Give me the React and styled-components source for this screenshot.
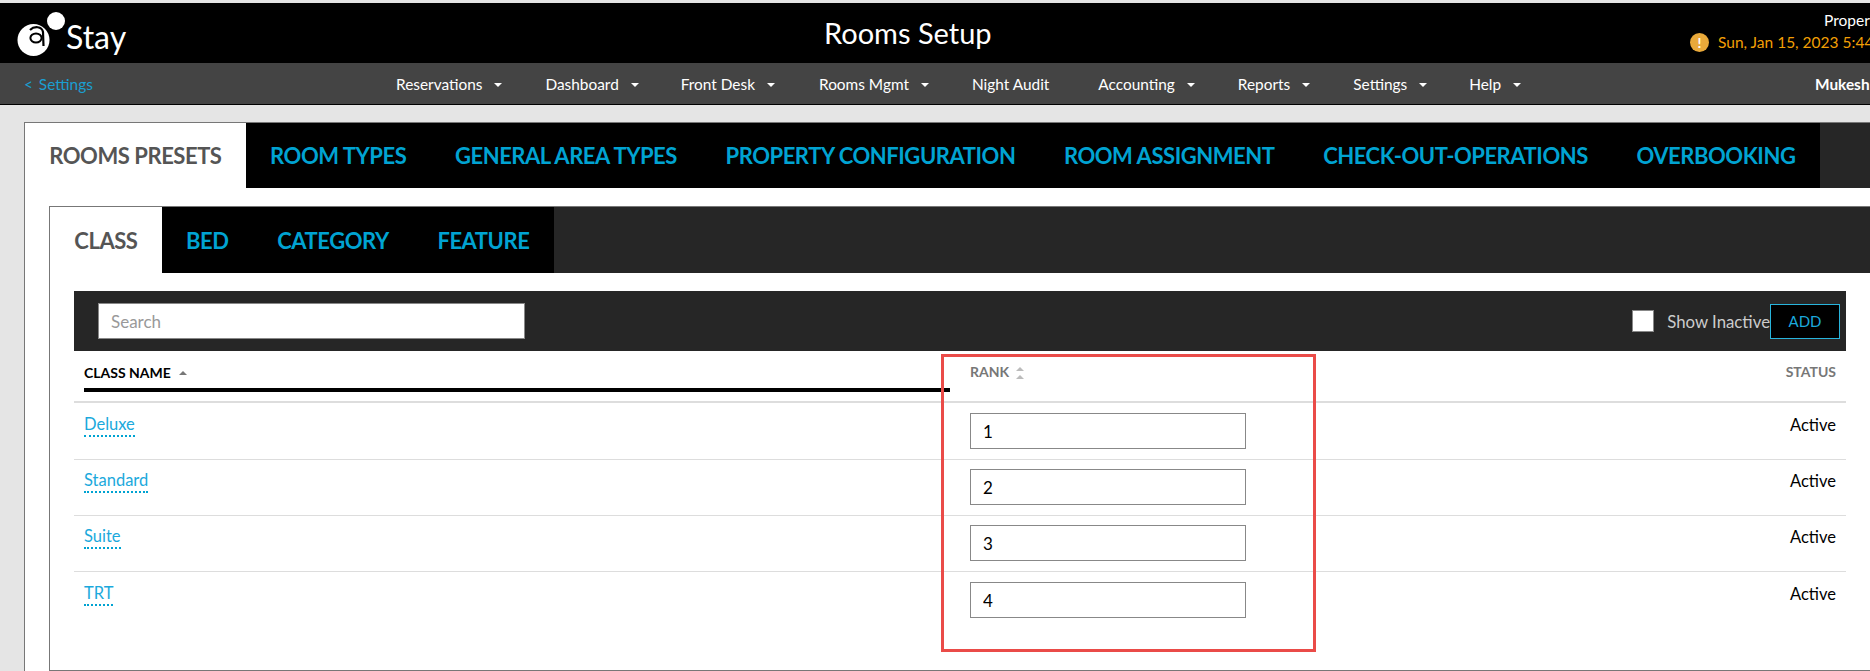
import React from 'react'
import styled, { createGlobalStyle } from 'styled-components'

const Global = createGlobalStyle`
  html, body { margin: 0; padding: 0; background: #e5e5e5; }
  body { font-family: Lato, "Open Sans", sans-serif; overflow: hidden; }
  * { box-sizing: border-box; }
`

const Page = styled.div`
  position: relative;
  width: 1870px;
  height: 671px;
  overflow: hidden;
  padding-top: 3px;
`

const TopBar = styled.header`
  height: 60px;
  background: #000;
  color: #fff;
  display: grid;
  grid-template-columns: 824px auto 1fr;
  align-items: start;
`

const Brand = styled.div`
  display: flex;
  align-items: flex-start;
  padding: 6px 0 0 14px;
`

const BrandName = styled.span`
  font-size: 32px;
  line-height: 40px;
  margin: 8px 0 0 -2px;
  font-weight: 400;
`

const PageTitle = styled.h1`
  margin: 11px 0 0;
  font-size: 29px;
  line-height: 38px;
  font-weight: 400;
`

const Info = styled.div`
  justify-self: end;
  width: 180px;
  overflow: hidden;
  font-size: 15.5px;
  white-space: nowrap;
`

const PropertyLine = styled.div`
  line-height: 20px;
  margin: 7px 0 2px;
  padding-left: 134px;
`

const DateLine = styled.div`
  display: flex;
  align-items: center;
  gap: 9px;
  color: #f29f05;
  line-height: 20px;
`

const Alert = styled.span`
  flex: none;
  width: 19px;
  height: 19px;
  border-radius: 50%;
  background: #e9a93a;
  color: #fff;
  font-size: 14px;
  font-weight: 700;
  line-height: 19px;
  text-align: center;
`

const NavBar = styled.nav`
  height: 42px;
  background: #444;
  border-bottom: 1px solid #000;
  display: flex;
  align-items: center;
  font-size: 15.4px;
  color: #fff;
  white-space: nowrap;
`

const BackLink = styled.a`
  color: #1b9fd1;
  margin-left: 24px;
  width: 372px;
  word-spacing: 2px;
`

const Menu = styled.ul`
  display: flex;
  list-style: none;
  margin: 0;
  padding: 0;
  width: 1419px;
`

const MenuItem = styled.li`
  display: flex;
  align-items: center;
  margin-right: ${p => p.$gap}px;
`

const Caret = styled.i`
  width: 0;
  height: 0;
  margin: 3px 0 0 12px;
  border-left: 4px solid transparent;
  border-right: 4px solid transparent;
  border-top: 4px solid #fff;
`

const UserName = styled.b`
  font-weight: 700;
`

const Panel = styled.section`
  margin-top: ${p => p.$top}px;
  margin-left: ${p => p.$left}px;
  width: ${p => p.$width}px;
  background: #fff;
  border: 1px solid #777;
`

const TabBar = styled.div`
  background: #262626;
  height: ${p => p.$height}px;
  display: flex;
`

const TabList = styled.div`
  display: flex;
  background: #000;
  width: ${p => p.$width}px;
`

const Tab = styled.a`
  display: flex;
  align-items: center;
  padding: 0 24.3px;
  font-size: 22px;
  font-weight: 700;
  letter-spacing: -0.45px;
  white-space: nowrap;
  color: ${p => (p.$active ? '#555' : '#00a3d2')};
  background: ${p => (p.$active ? '#fff' : '#000')};
`

const Body = styled.div`
  padding: 18px 27px 42px 24px;
`

const Toolbar = styled.div`
  height: 60px;
  background: #262626;
  display: flex;
  align-items: center;
  padding: 0 6px 0 24px;
`

const Search = styled.input`
  width: 427px;
  height: 36px;
  border: 1px solid #888;
  padding: 0 12px;
  font: 400 17px Lato, sans-serif;
  background: #fff;
  &::placeholder { color: #999; }
`

const Spacer = styled.div`
  flex: 1;
`

const Check = styled.span`
  width: 22px;
  height: 22px;
  background: #fff;
  border: 1px solid #888;
  margin-right: 13px;
`

const CheckLabel = styled.span`
  color: #ccc;
  font-size: 16.8px;
`

const AddButton = styled.button`
  width: 70px;
  height: 35px;
  background: #000;
  border: 1px solid #28b4dc;
  color: #1ba9dc;
  font: 400 15px Lato, sans-serif;
`

const HeadRow = styled.div`
  display: grid;
  grid-template-columns: 876px 1fr auto;
  height: 52px;
  border-bottom: 2px solid #ddd;
`

const NameHead = styled.div`
  margin-left: 10px;
  height: 41px;
  border-bottom: 4px solid #000;
  padding-top: 13px;
  font-size: 14px;
  font-weight: 700;
  line-height: 18px;
  color: #000;
`

const RankHead = styled.div`
  padding: 12px 0 0 20px;
  font-size: 14px;
  font-weight: 700;
  line-height: 18px;
  color: #777;
`

const StatusHead = styled(RankHead)`
  padding: 12px 10px 0 0;
`

const SortUp = styled.i`
  display: inline-block;
  width: 0;
  height: 0;
  margin-left: 8px;
  vertical-align: 3px;
  border-left: 4px solid transparent;
  border-right: 4px solid transparent;
  border-bottom: 4px solid ${p => p.$color};
`

const SortBoth = styled.span`
  display: inline-flex;
  flex-direction: column;
  gap: 4px;
  margin: 4px 0 0 7px;
  vertical-align: top;
  &::before, &::after {
    content: '';
    width: 0;
    height: 0;
    border-left: 4px solid transparent;
    border-right: 4px solid transparent;
    border-bottom: 4px solid #bbb;
  }
`

const Row = styled.div`
  display: grid;
  grid-template-columns: 876px 1fr auto;
  height: 56px;
  padding-top: 9px;
  border-bottom: 1px solid #ddd;
  &:nth-child(2) { height: 57px; padding-top: 10px; }
  &:last-child { border-bottom: 0; padding-top: 10px; }
`

const NameCell = styled.div`
  display: flex;
  align-items: flex-start;
  padding-left: 10px;
`

const NameLink = styled.a`
  margin-top: 1px;
  line-height: 21px;
  font-size: 16.5px;
  color: #1ba9dc;
  border-bottom: 2px dotted #00a3d2;
`

const RankCell = styled.div`
  padding-left: 20px;
`

const RankInput = styled.input`
  display: block;
  width: 276px;
  height: 36px;
  border: 1px solid #888;
  padding: 0 12px;
  font: 400 17px Lato, sans-serif;
  color: #000;
  background: #fff;
`

const StatusCell = styled.div`
  padding-right: 10px;
  font-size: 16.5px;
  line-height: 24px;
  color: #000;
`

const Highlight = styled.div`
  position: absolute;
  left: 941px;
  top: 354px;
  width: 375px;
  height: 298px;
  border: 3px solid #ea4b48;
  pointer-events: none;
`

const menu = [
  ['Reservations', 43],
  ['Dashboard', 42],
  ['Front Desk', 44],
  ['Rooms Mgmt', 43],
  ['Night Audit', 49],
  ['Accounting', 43],
  ['Reports', 43],
  ['Settings', 42],
  ['Help', 0],
]

const presetTabs = ['ROOM TYPES', 'GENERAL AREA TYPES', 'PROPERTY CONFIGURATION', 'ROOM ASSIGNMENT', 'CHECK-OUT-OPERATIONS', 'OVERBOOKING']
const classTabs = ['BED', 'CATEGORY', 'FEATURE']
const rooms = ['Deluxe', 'Standard', 'Suite', 'TRT']

function Logo() {
  return (
    <svg width="54" height="50" viewBox="0 0 54 50">
      <circle cx="19.5" cy="31" r="16" fill="#fff" />
      <circle cx="42" cy="12" r="9" fill="#fff" />
      <ellipse cx="22" cy="29" rx="5.6" ry="4.6" fill="none" stroke="#000" strokeWidth="2" />
      <path d="M16 21 C20 17 28 17 29 23 L29.5 37" fill="none" stroke="#000" strokeWidth="2.2" />
    </svg>
  )
}

export default function App() {
  return (
    <Page>
      <Global />
      <TopBar>
        <Brand>
          <Logo />
          <BrandName>Stay</BrandName>
        </Brand>
        <PageTitle>Rooms Setup</PageTitle>
        <Info>
          <PropertyLine>Property</PropertyLine>
          <DateLine><Alert>!</Alert>Sun, Jan 15, 2023 5:44 PM</DateLine>
        </Info>
      </TopBar>
      <NavBar>
        <BackLink>&lt; Settings</BackLink>
        <Menu>
          {menu.map(([label, gap]) => (
            <MenuItem key={label} $gap={gap}>
              {label}
              {label !== 'Night Audit' && <Caret />}
            </MenuItem>
          ))}
        </Menu>
        <UserName>Mukesh</UserName>
      </NavBar>
      <Panel $top={17} $left={24} $width={1880}>
        <TabBar $height={65}>
          <TabList $width={1795}>
            <Tab $active>ROOMS PRESETS</Tab>
            {presetTabs.map(t => <Tab key={t}>{t}</Tab>)}
          </TabList>
        </TabBar>
        <Panel $top={18} $left={24} $width={1825}>
          <TabBar $height={66}>
            <TabList $width={503}>
              <Tab $active>CLASS</Tab>
              {classTabs.map(t => <Tab key={t}>{t}</Tab>)}
            </TabList>
          </TabBar>
          <Body>
            <Toolbar>
              <Search placeholder="Search" />
              <Spacer />
              <Check />
              <CheckLabel>Show Inactive</CheckLabel>
              <AddButton>ADD</AddButton>
            </Toolbar>
            <div>
              <HeadRow>
                <NameHead>CLASS NAME<SortUp $color="#777" /></NameHead>
                <RankHead>RANK<SortBoth /></RankHead>
                <StatusHead>STATUS</StatusHead>
              </HeadRow>
              {rooms.map((name, i) => (
                <Row key={name}>
                  <NameCell><NameLink>{name}</NameLink></NameCell>
                  <RankCell><RankInput readOnly value={i + 1} /></RankCell>
                  <StatusCell>Active</StatusCell>
                </Row>
              ))}
            </div>
          </Body>
        </Panel>
      </Panel>
      <Highlight />
    </Page>
  )
}
